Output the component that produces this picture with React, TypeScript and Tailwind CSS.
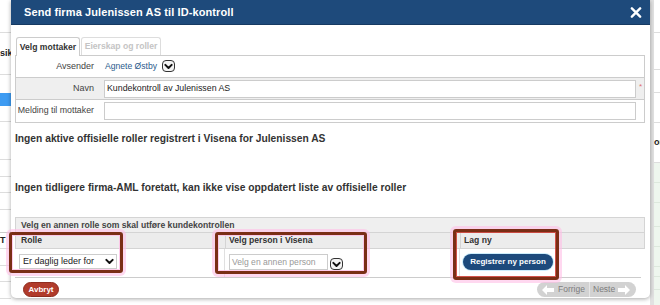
import React from "react";

function Chevron({ className = "" }: { className?: string }) {
  return (
    <svg viewBox="0 0 10 10" className={className}>
      <path d="M1.5 3.2 L5 6.7 L8.5 3.2" fill="none" stroke="#111" strokeWidth="2.2" strokeLinecap="round" strokeLinejoin="round" />
    </svg>
  );
}

function DropBtn() {
  return (
    <div className="w-[13px] h-[12px] rounded-[4px] border-[1.5px] border-[#333] bg-[#f4f4f4] flex items-center justify-center">
      <Chevron className="w-[9px] h-[9px]" />
    </div>
  );
}

function Arrow({ dir }: { dir: "left" | "right" }) {
  return (
    <svg viewBox="0 0 12 10" className="w-[12px] h-[10px]">
      {dir === "left" ? (
        <polygon points="0,5 5,0 5,3 12,3 12,7 5,7 5,10" fill="#fff" />
      ) : (
        <polygon points="12,5 7,0 7,3 0,3 0,7 7,7 7,10" fill="#fff" />
      )}
    </svg>
  );
}

export default function App() {
  return (
    <div
      className="relative w-[660px] h-[305px] overflow-hidden bg-white text-[#333]"
      style={{ fontFamily: '"Liberation Sans", Arial, sans-serif' }}
    >
      {/* background page */}
      <div className="flex h-full">
        <div className="w-[11px] flex flex-col">
          <div className="h-[33px] border-b border-[#ddd]" />
          <div className="h-[42px] border-b border-[#ddd] flex items-center text-[9px] font-bold text-[#222] whitespace-nowrap overflow-hidden">sik</div>
          <div className="h-[18px]" />
          <div className="h-[13px] bg-[#3d9bf2]" />
          <div className="h-[16px] border-b border-[#ddd]" />
          <div className="h-[38px] border-b border-[#ddd]" />
          <div className="h-[17px] border-b border-[#ddd]" />
          <div className="h-[16px] border-b border-[#ddd]" />
          <div className="h-[17px] border-b border-[#ddd]" />
          <div className="h-[23px] border-b border-[#ccc]" />
          <div className="h-[16px] border-b border-[#ddd] flex items-center text-[9px] font-bold text-[#222]">T</div>
          <div className="h-[17px] border-b border-[#ddd]" />
          <div className="h-[16px] border-b border-[#ddd]" />
          <div className="h-[17px] border-b border-[#ddd]" />
        </div>
        <div className="flex-1" />
        <div className="w-[10px] flex flex-col border-l-[4px] border-[#e2e2e2]">
          <div className="h-[33px] border-b border-[#ddd]" />
          <div className="h-[37px] border-b border-[#ddd]" />
          <div className="h-[23px] border-b border-[#ddd]" />
          <div className="h-[30px] border-b border-[#ddd]" />
          <div className="h-[40px] border-b border-[#ddd] flex items-center text-[9px] font-bold text-[#222] whitespace-nowrap overflow-hidden">ons</div>
          <div className="h-[20px] border-b border-[#dde8dd] bg-[#eef6ee]" />
          <div className="h-[20px] border-b border-[#dde8dd] bg-[#eef6ee]" />
          <div className="h-[24px] border-b border-[#dde8dd] bg-[#eef6ee]" />
          <div className="h-[20px] border-b border-[#dde8dd] bg-[#eef6ee]" />
          <div className="h-[20px] border-b border-[#dde8dd] bg-[#eef6ee]" />
          <div className="h-[10px] border-b border-[#dde8dd] bg-[#eef6ee]" />
          <div className="h-[13px] border-b border-[#dde8dd] bg-[#eef6ee]" />
          <div className="flex-1 bg-[#eef6ee]" />
        </div>
      </div>

      {/* dialog */}
      <div className="absolute left-[11px] top-0 w-[639px] h-[298px] bg-white rounded-b-[5px] shadow-[0_1px_4px_rgba(0,0,0,0.35)] flex flex-col">
        <div className="h-[25px] bg-[#1e4a7b] border-b border-[#163a62] flex items-center justify-between pl-[13px] pr-[8px]">
          <span className="text-white font-bold text-[11px] tracking-[0.1px]">Send firma Julenissen AS til ID-kontroll</span>
          <svg viewBox="0 0 12 12" className="w-[12px] h-[11px]">
            <path d="M1.5 1.5 L10.5 10.5 M10.5 1.5 L1.5 10.5" stroke="#fff" strokeWidth="2.6" strokeLinecap="round" />
          </svg>
        </div>

        <div className="flex-1 flex flex-col pl-[4px] pr-[5px]">
          {/* tabs */}
          <div className="mt-[11px] flex items-end h-[19px] pl-[1px] gap-[1px]">
            <div className="h-[19px] w-[64px] border border-b-0 border-[#ccc] rounded-t-[3px] bg-white flex items-center justify-center text-[8.6px] font-bold text-[#333] relative top-[1px] whitespace-nowrap">
              Velg mottaker
            </div>
            <div className="h-[18px] w-[80px] border border-b-0 border-[#ddd] rounded-t-[3px] bg-white flex items-center justify-center text-[8.6px] font-bold text-[#c4c4c4] whitespace-nowrap">
              Eierskap og roller
            </div>
          </div>

          {/* form */}
          <div className="border border-[#ccc] flex flex-col">
            <div className="h-[21px] flex items-center">
              <div className="w-[78px] shrink-0 text-right text-[9px] text-[#444] whitespace-nowrap">Avsender</div>
              <div className="ml-[11px] flex items-center gap-[5px]">
                <span className="text-[8.6px] text-[#2a5a8c]">Agnete Østby</span>
                <DropBtn />
              </div>
            </div>
            <div className="h-[22px] flex items-center bg-[#efefef] border-t border-[#ccc]">
              <div className="w-[78px] shrink-0 text-right text-[9px] text-[#444] whitespace-nowrap">Navn</div>
              <div className="ml-[10px] w-[532px] h-[18px] bg-white border border-[#ccc] flex items-center pl-[2px] text-[8.8px] text-[#222]">
                Kundekontroll av Julenissen AS
              </div>
              <span className="ml-[3px] text-[8px] text-[#e07070] self-start mt-[3px]">*</span>
            </div>
            <div className="h-[23px] flex items-center border-t border-[#ccc]">
              <div className="w-[78px] shrink-0 text-right text-[8.8px] text-[#444] whitespace-nowrap">Melding til mottaker</div>
              <div className="ml-[10px] w-[532px] h-[18px] bg-white border border-[#ccc]" />
            </div>
          </div>

          <div className="mt-[9px] h-[14px] flex items-center text-[10.25px] font-bold text-[#333] whitespace-nowrap">
            Ingen aktive offisielle roller registrert i Visena for Julenissen AS
          </div>
          <div className="mt-[35px] h-[14px] flex items-center text-[10.25px] font-bold text-[#333] whitespace-nowrap">
            Ingen tidligere firma-AML foretatt, kan ikke vise oppdatert liste av offisielle roller
          </div>

          {/* table */}
          <div className="mt-[22px] flex flex-col">
            <div className="h-[16px] bg-[#efefef] border border-[#d4d4d4] flex items-center pl-[5px] text-[8.6px] font-bold text-[#444] whitespace-nowrap">
              Velg en annen rolle som skal utføre kundekontrollen
            </div>
            <div className="h-[16px] bg-[#ececec] border border-t-0 border-[#d4d4d4] flex text-[8.6px] font-bold text-[#333] whitespace-nowrap">
              <div className="w-[209px] pl-[5px] flex items-center">Rolle</div>
              <div className="w-[235px] pl-[3px] flex items-center border-l border-[#d4d4d4]">Velg person i Visena</div>
              <div className="flex-1 pl-[3px] flex items-center border-l border-[#d4d4d4]">Lag ny</div>
            </div>
            <div className="h-[29px] border-b border-[#ccc] mr-[4px] flex">
              <div className="w-[209px] pl-[4px] pt-[5px]">
                <div className="w-[98px] h-[15px] border border-[#ccc] bg-white flex items-center justify-between pl-[3px] pr-[2px] text-[9px] text-[#222] whitespace-nowrap">
                  <span>Er daglig leder for</span>
                  <Chevron className="w-[9px] h-[9px]" />
                </div>
              </div>
              <div className="w-[235px] pl-[4px] pt-[5px] border-l border-[#e0e0e0] flex items-start gap-[2px]">
                <div className="w-[99px] h-[16px] border border-[#ccc] bg-white flex items-center pl-[2px] text-[8.6px] text-[#999] whitespace-nowrap">
                  Velg en annen person
                </div>
                <div className="mt-[4px]">
                  <DropBtn />
                </div>
              </div>
              <div className="flex-1 pl-[3px] pt-[5px] border-l border-[#e0e0e0]">
                <div className="w-[90px] h-[16px] rounded-full bg-[#1d4a7c] ring-1 ring-[#cdeefc] flex items-center justify-center text-[8px] font-bold text-white whitespace-nowrap">
                  Registrer ny person
                </div>
              </div>
            </div>
          </div>

          {/* footer */}
          <div className="mt-[4px] flex items-center justify-between pl-[8px] pr-[9px]">
            <div className="w-[36px] h-[15px] rounded-full bg-[#b13b2b] border border-[#8f2c1f] flex items-center justify-center text-[8px] font-bold text-white">
              Avbryt
            </div>
            <div className="w-[99px] h-[15px] rounded-full bg-[#d2d2d2] flex items-center text-[8.5px] text-[#7d7d7d]">
              <div className="flex items-center gap-[4px] pl-[5px] w-[53px] h-full border-r border-[#e6e6e6]">
                <Arrow dir="left" />
                <span>Forrige</span>
              </div>
              <div className="flex items-center gap-[3px] pl-[3px]">
                <span>Neste</span>
                <Arrow dir="right" />
              </div>
            </div>
          </div>
        </div>
      </div>

      {/* annotation boxes */}
      <div className="absolute left-[9px] top-[232px] w-[114px] h-[41px] border-[3px] border-[#7a2e15] rounded-[3px] shadow-[0_0_0_3px_rgba(255,190,230,0.6),inset_0_0_0_1px_rgba(255,190,230,0.8)]" />
      <div className="absolute left-[215px] top-[232px] w-[152px] h-[42px] border-[3px] border-[#7a2e15] rounded-[3px] shadow-[0_0_0_3px_rgba(255,190,230,0.6),inset_0_0_0_1px_rgba(255,190,230,0.8)]" />
      <div className="absolute left-[453px] top-[229px] w-[106px] h-[51px] border-[3px] border-[#7a2e15] rounded-[3px] shadow-[0_0_0_3px_rgba(255,190,230,0.6),inset_0_0_0_1px_rgba(200,40,30,0.8)]" />
    </div>
  );
}
